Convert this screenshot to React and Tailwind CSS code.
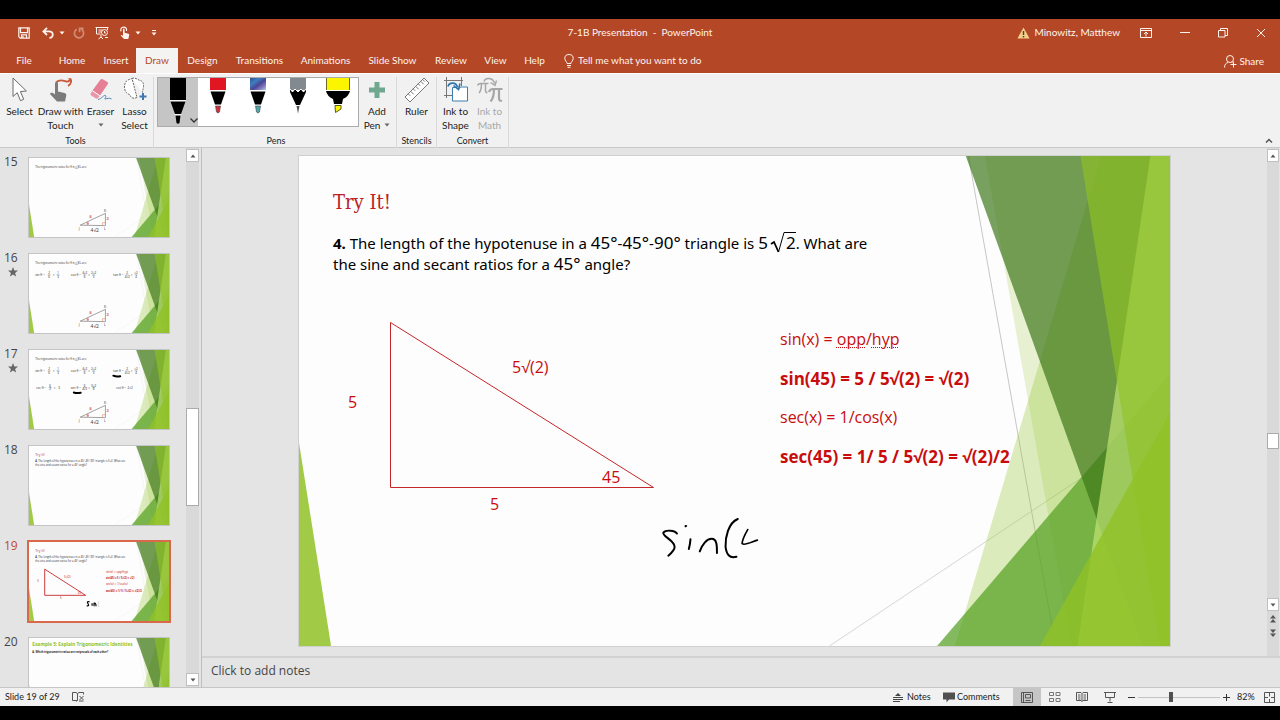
import { useState } from 'react';

const tabs = [
  { name: 'File', width: 'w-12' },
  { name: 'Home', width: 'w-12' },
  { name: 'Insert', width: 'w-10' },
  { name: 'Draw', width: 'w-[42px]' },
  { name: 'Design', width: 'w-[49px]' },
  { name: 'Transitions', width: 'w-[65px]' },
  { name: 'Animations', width: 'w-[67px]' },
  { name: 'Slide Show', width: 'w-[67px]' },
  { name: 'Review', width: 'w-[50px]' },
  { name: 'View', width: 'w-[39px]' },
  { name: 'Help', width: 'w-[39px]' },
];

const slides = [
  { id: 15 },
  { id: 16, animated: true },
  { id: 17, animated: true },
  { id: 18 },
  { id: 19 },
  { id: 20 },
];

/* ---------- Icons ---------- */

function Caret({ className = '' }) {
  return (
    <svg viewBox="0 0 6 4" className={`h-1 w-1.5 shrink-0 fill-current ${className}`} aria-hidden="true">
      <path d="M0.5 0.5h5L3 3.5z" />
    </svg>
  );
}

function SaveIcon() {
  return (
    <svg viewBox="0 0 12 12" className="size-3" fill="none" stroke="currentColor" strokeWidth="1.2">
      <path d="M0.8 0.8h10.4v10.4H2.2L0.8 9.8z" />
      <path d="M2.5 1v4.6h7V1" />
      <path d="M3.5 11V7.8h5V11M5 9v2" />
    </svg>
  );
}

function UndoIcon() {
  return (
    <svg viewBox="0 0 12 12" className="size-3" fill="none" stroke="currentColor" strokeWidth="1.8">
      <path d="M5 0.8L1.4 4.4 5 8M1.6 4.4h5.2c5.2 0 5.2 6.4 0.6 6.4" />
    </svg>
  );
}

function RedoIcon() {
  return (
    <svg viewBox="0 0 12 12" className="size-3 opacity-40" fill="none" stroke="currentColor" strokeWidth="1.7">
      <path d="M3.8 2.2a4.6 4.6 0 1 0 4.6 0.1M6.6 5.2V1.4h4" />
    </svg>
  );
}

function PresentIcon() {
  return (
    <svg viewBox="0 0 14 14" className="size-3.5" fill="none" stroke="currentColor">
      <path d="M0.5 1.5h13M1.5 1.5v6.5h4M3.5 4h4M3.5 6h3M6 8.5v2.5M3.5 13l2.5-2 2 2M12.5 2v2" />
      <circle cx="9.5" cy="6.5" r="3" />
      <path d="M9.5 5v2h1.5M10 11.5h3" />
    </svg>
  );
}

function TouchIcon() {
  return (
    <svg viewBox="0 0 12 14" className="h-3.5 w-3" fill="none" stroke="currentColor">
      <path d="M2.2 5.4A2.9 2.9 0 1 1 7.4 5" strokeWidth="1.2" />
      <path
        d="M4 3.2c0-1 1.6-1 1.6 0v3.6l3.8 0.9c0.8 0.2 1 0.7 0.8 1.5l-0.9 3.8H5L1.6 9.6c0.4-0.8 1.4-0.7 2.4 0.4z"
        fill="currentColor"
        stroke="none"
      />
    </svg>
  );
}

function BulbIcon() {
  return (
    <svg viewBox="0 0 10 14" className="h-3.5 w-2.5" fill="none" stroke="currentColor">
      <path d="M3 9.5C3 7.5 0.8 7 0.8 4.5a4.2 4 0 0 1 8.4 0C9.2 7 7 7.5 7 9.5z" />
      <path d="M3 11.5h4M3.5 13.3h3" />
    </svg>
  );
}

function WarningIcon() {
  return (
    <svg viewBox="0 0 13 12" className="h-3 w-[13px]">
      <path d="M6.5 0.5L12.6 11.5H0.4z" fill="#f5cf8e" />
      <path d="M6.5 4v4M6.5 9v1.4" stroke="#5b4323" strokeWidth="1.5" />
    </svg>
  );
}

function SelectIcon() {
  return (
    <svg viewBox="0 0 16 26" className="h-[26px] w-4">
      <path d="M1 1v18.500l4.200-3.800 3.300 8 3.200-1.400-3.300-7.800 6-0.500z" fill="#fff" stroke="#6a6a6a" />
    </svg>
  );
}

function DrawTouchIcon() {
  return (
    <svg viewBox="0 0 24 26" className="h-[26px] w-6">
      <path d="M7 5.5c4-4 8-1.5 10.5-1S23 1.5 21 2c2 1 1.5 5-2 7" fill="none" stroke="#c8593a" strokeWidth="1.8" />
      <path
        d="M6 6.5c0-2 3-2 3 0v8l6.5 1.5c1.7 0.4 2 1.5 1.7 3L16 24.5H8L1 17c0.5-2 3-1.5 5 0.5z"
        fill="#7b7b7b"
      />
    </svg>
  );
}

function EraserIcon() {
  return (
    <svg viewBox="0 0 24 26" className="h-[26px] w-6">
      <path d="M11.5 2.5q1-1 2.2-0.3L18.5 5q1 0.8 0.4 2L11 18.5 3.5 13.5z" fill="#e58097" />
      <path d="M3.5 13.5L11 18.5 9 21q-0.8 1-2 0.5L2.2 18.5q-1.2-0.8-0.5-2z" fill="#ea96a8" />
      <path d="M3.3 13.7l7.5 5" stroke="#fff" />
      <path d="M9 22.5c4-1 6-5 7.5-4s-2 4 0 3.5 3.5-1.5 6 0" fill="none" stroke="#4f86b5" />
    </svg>
  );
}

function LassoIcon() {
  return (
    <svg viewBox="0 0 24 26" className="h-[26px] w-6">
      <path
        d="M9 1.5c3.5-1.5 6 1.5 8 2s4 2 3.5 6c-0.3 3-1 4-1 6M14 20.5c-3 1.5-6 0.5-6.5-1.5-0.5-2-3.5-2-5-4.5-1.5-3-1.5-8 1-10.5C5 2.5 7 2.5 9 1.5z"
        fill="#fff"
        stroke="#6b6b6b"
        strokeDasharray="2 1"
      />
      <path d="M20 16v7M16.5 19.5h7" stroke="#3f76b0" strokeWidth="2" />
    </svg>
  );
}

function AddPenIcon() {
  return (
    <svg viewBox="0 0 24 26" className="h-[26px] w-6">
      <path d="M9.5 5h5v5.5H20v5h-5.5V21h-5v-5.5H4v-5h5.5z" fill="#6fa88f" />
    </svg>
  );
}

function RulerIcon() {
  return (
    <svg viewBox="0 0 26 26" className="size-[26px]" fill="#fff" stroke="#777">
      <path d="M1 20L20 1l5 5L6 25z" />
      <path d="M4.2 16.8l2 2M6.7 14.3l3 3M9.2 11.8l2 2M11.7 9.3l3 3M14.2 6.8l2 2M16.7 4.3l3 3M18.7 2.5l2 2" />
    </svg>
  );
}

function InkShapeIcon() {
  return (
    <svg viewBox="0 0 26 26" className="size-[26px]" fill="none">
      <path d="M1 3.5h19M3.5 0v21M1 18.5h8M18.5 0v9" stroke="#777" />
      <path d="M9.5 10.5h4q2 3 4-0.5h7v14h-15z" fill="#fff" stroke="#3d7cab" />
      <path d="M5 9.5c1-4 8-5.5 9.5 1" stroke="#2f76ac" strokeWidth="1.8" />
      <path d="M10.5 8.5l5 4 1.5-6" stroke="#2f76ac" strokeWidth="1.6" />
    </svg>
  );
}

function InkMathIcon() {
  return (
    <svg viewBox="0 0 26 26" className="size-[26px]" fill="none" stroke="#a6a6a6">
      <path d="M0.5 8.5q1-2 3-2h8M4.5 6.5q0 7-2.5 9.5M8.5 6.5v7q0 2.5 2 2" strokeWidth="1.5" />
      <path d="M12 15q1-3 4-3h9.5M17 12q0 9-3.5 12.5M22 12v9q0 3.5 3 2.5" strokeWidth="2.2" />
      <path d="M7 4.5c1-4 9-4.5 10.5 2M13.5 5.5l4.5 3 1.5-5" strokeWidth="1.4" />
    </svg>
  );
}

function PenTip({ kind }) {
  if (kind === 'selected') {
    return (
      <svg viewBox="0 0 16 46" className="h-[46px] w-4 shrink-0">
        <path d="M0 0h16v22H0z" />
        <path d="M0.5 23.5h15L11 36H5zM5.5 37.5h5L9.5 45q-1.5 1.5-3 0z" />
        <path d="M0 22.7h16M4.5 36.7h7" stroke="#fff" />
      </svg>
    );
  }
  if (kind === 'highlighter') {
    return (
      <svg viewBox="0 0 24 36" className="h-9 w-6">
        <path d="M0 0h24v12H0z" fill="#fbf500" />
        <path d="M0.5 0v12M23.5 0v12" stroke="#6d6a2a" />
        <path d="M0 13h24q-1 5-7 8l-1 5H8l-1-5q-6-3-7-8z" />
        <path d="M9 27.5h6v3.5l-5.5 3.5z" fill="#fbf500" stroke="#5c5a1b" />
      </svg>
    );
  }
  const colors = { red: '#e01622', galaxy: 'url(#galaxy)', pencil: '#828a90' };
  const tips = { red: '#d22f3c', galaxy: '#4fa6ad', pencil: '#555' };
  return (
    <svg viewBox="0 0 16 36" className="h-9 w-4">
      <defs>
        <linearGradient id="galaxy" x1="0" y1="0" x2="1" y2="1">
          <stop offset="0" stopColor="#2f4f93" />
          <stop offset="0.3" stopColor="#3f7fc0" />
          <stop offset="0.55" stopColor="#4a4596" />
          <stop offset="0.8" stopColor="#8a7fc0" />
          <stop offset="1" stopColor="#9adbe6" />
        </linearGradient>
      </defs>
      <path d="M0 0h16v12H0z" fill={colors[kind]} />
      {kind === 'pencil' ? (
        <>
          <path d="M0 14v-3l2.5 3L5 11l3 3 3-3 2.5 3L16 11v3L10 27H6z" />
          <path d="M0 11l2.5 3L5 11l3 3 3-3 2.5 3L16 11" fill="none" stroke="#fff" />
          <path d="M6.5 28h3L8 35.5z" fill={tips[kind]} />
        </>
      ) : (
        <>
          <path d="M0.5 13.5h15L11 26.5H5z" />
          <path d="M5.5 28h5l-1 6q-1.5 2-3 0z" fill={tips[kind]} stroke="#444" strokeWidth="0.6" />
        </>
      )}
    </svg>
  );
}

/* ---------- Title bar and tabs ---------- */

function TitleBar() {
  return (
    <div className="grid h-[29px] shrink-0 grid-cols-[1fr_auto_1fr] items-center bg-[#b34726] pb-0.5 text-[10px] text-[#fff3ee]">
      <div className="flex items-center pl-[18px]">
        <button aria-label="Save"><SaveIcon /></button>
        <button aria-label="Undo" className="ml-3 flex items-center gap-[5px]"><UndoIcon /><Caret /></button>
        <button aria-label="Redo" className="ml-2"><RedoIcon /></button>
        <button aria-label="Start from beginning" className="ml-2.5"><PresentIcon /></button>
        <button aria-label="Touch mode" className="ml-2.5 flex items-center gap-1"><TouchIcon /><Caret /></button>
        <button aria-label="Customize toolbar" className="ml-2.5 flex flex-col items-center gap-px">
          <span className="h-px w-1 bg-current" />
          <Caret />
        </button>
      </div>
      <h1 className="whitespace-pre">7-1B Presentation  -  PowerPoint</h1>
      <div className="flex items-center justify-end pr-3.5">
        <button className="flex items-center gap-1"><WarningIcon />Minowitz, Matthew</button>
        <button aria-label="Ribbon display options" className="ml-5">
          <svg viewBox="0 0 12 10" className="h-2.5 w-3" fill="none" stroke="currentColor">
            <path d="M0.5 0.5h11v9H0.5zM0.5 2.5h11M6 8.5V4.5M4 6l2-2 2 2" />
          </svg>
        </button>
        <button aria-label="Minimize" className="ml-7 flex h-3 items-center">
          <span className="block h-px w-2.5 bg-current" />
        </button>
        <button aria-label="Restore" className="ml-7">
          <svg viewBox="0 0 10 10" className="size-2.5" fill="none" stroke="currentColor">
            <path d="M0.5 2.5h6.5v6.5H0.5zM2.5 2.5v-2h7v7H7" />
          </svg>
        </button>
        <button aria-label="Close" className="ml-7">
          <svg viewBox="0 0 10 10" className="size-2.5" fill="none" stroke="currentColor">
            <path d="M1 1l8 8M9 1l-8 8" />
          </svg>
        </button>
      </div>
    </div>
  );
}

function TabBar({ active, onSelect }) {
  return (
    <div className="flex h-[25px] shrink-0 items-stretch bg-[#b34726] text-[10px] text-[#fff3ee]">
      {tabs.map((tab) => (
        <button
          key={tab.name}
          onClick={() => onSelect(tab.name)}
          className={`${tab.width} shrink-0 whitespace-nowrap ${
            active === tab.name ? 'bg-[#f5f3f2] text-[#b34726]' : ''
          }`}
        >
          {tab.name}
        </button>
      ))}
      <button className="ml-2.5 flex items-center gap-1 whitespace-nowrap">
        <BulbIcon />
        Tell me what you want to do
      </button>
      <button className="ml-auto flex items-center gap-0.5 pt-0.5 pr-4">
        <svg viewBox="0 0 13 13" className="size-[13px]" fill="none" stroke="currentColor">
          <circle cx="6" cy="4" r="3.5" />
          <path d="M0.5 12.5C0.5 9.5 2 8 4 7.5M7.5 7l1 0.8M6.5 9.5h6M9.5 6.5v6" />
        </svg>
        Share
      </button>
    </div>
  );
}

/* ---------- Ribbon ---------- */

function ToolButton({ icon, lines, width, caret, disabled }) {
  return (
    <button
      disabled={disabled}
      className={`flex h-full shrink-0 flex-col items-center whitespace-nowrap ${width} ${
        disabled ? 'text-[#a8a8a8]' : ''
      }`}
    >
      {icon}
      <span className="mt-px leading-[14px]">{lines[0]}</span>
      <span className="flex h-[14px] items-center gap-1 leading-[14px]">
        {lines[1]}
        {caret && <Caret className="text-[#666]" />}
      </span>
    </button>
  );
}

function RibbonGroup({ label, className, children }) {
  return (
    <section aria-label={label} className={`flex shrink-0 flex-col border-r border-[#dadada] ${className}`}>
      <div className="flex h-[57px] justify-center">{children}</div>
      <p className="text-center text-[9px] leading-[14px] text-[#222]">{label}</p>
    </section>
  );
}

function Ribbon() {
  return (
    <div className="flex h-[75px] shrink-0 items-start border-t border-b border-t-white border-b-[#c9c9c9] bg-[#f1f1f1] pt-[3px] text-[10px] text-[#222]">
      <RibbonGroup label="Tools" className="w-[154px] pr-0.5">
        <ToolButton icon={<SelectIcon />} lines={['Select']} width="w-[38px]" />
        <ToolButton icon={<DrawTouchIcon />} lines={['Draw with', 'Touch']} width="w-11" />
        <ToolButton icon={<EraserIcon />} lines={['Eraser']} width="w-9" caret />
        <ToolButton icon={<LassoIcon />} lines={['Lasso', 'Select']} width="w-8" />
      </RibbonGroup>
      <RibbonGroup label="Pens" className="w-[243px] pl-0.5">
        <div className="flex h-[50px] border border-[#ababab] bg-white">
          <button aria-label="Black pen" className="flex w-10 items-start justify-center bg-[#c5c5c5]">
            <span className="w-3" />
            <PenTip kind="selected" />
            <svg viewBox="0 0 8 5" className="mt-10 ml-1 h-[5px] w-2" fill="none" stroke="#333" strokeWidth="1.3">
              <path d="M0.5 0.5L4 4l3.5-3.5" />
            </svg>
          </button>
          <button aria-label="Red pen" className="flex w-10 justify-center"><PenTip kind="red" /></button>
          <button aria-label="Galaxy pen" className="flex w-10 justify-center"><PenTip kind="galaxy" /></button>
          <button aria-label="Pencil" className="flex w-10 justify-center"><PenTip kind="pencil" /></button>
          <button aria-label="Yellow highlighter" className="flex w-10 justify-center"><PenTip kind="highlighter" /></button>
        </div>
        <ToolButton icon={<AddPenIcon />} lines={['Add', 'Pen']} width="w-9" caret />
      </RibbonGroup>
      <RibbonGroup label="Stencils" className="w-10">
        <ToolButton icon={<RulerIcon />} lines={['Ruler']} width="w-9" />
      </RibbonGroup>
      <RibbonGroup label="Convert" className="w-[72px]">
        <ToolButton icon={<InkShapeIcon />} lines={['Ink to', 'Shape']} width="w-[34px]" />
        <ToolButton icon={<InkMathIcon />} lines={['Ink to', 'Math']} width="w-[34px]" disabled />
      </RibbonGroup>
      <button aria-label="Collapse ribbon" className="mt-auto mr-[7px] mb-1 ml-auto">
        <svg viewBox="0 0 8 5" className="h-[5px] w-2" fill="none" stroke="#555" strokeWidth="1.5">
          <path d="M1 4.5l3-3 3 3" />
        </svg>
      </button>
    </div>
  );
}

/* ---------- Slide artwork ---------- */

// Facet theme background, in thousands of EMU
function Facets({ className }) {
  return (
    <svg viewBox="0 0 12192 6858" preserveAspectRatio="none" className={className} aria-hidden="true">
      <path d="M9371 0L10590 6858" stroke="#b0b0b0" strokeWidth="10" />
      <path d="M12189 3681L7425 6858" stroke="#cfcfcf" strokeWidth="12" />
      <path d="M11227 0H12192V6858H9181z" fill="#90c226" fillOpacity="0.3" />
      <path d="M9603 0H12192V6858H10812z" fill="#90c226" fillOpacity="0.2" />
      <path d="M12192 3048V6858H8932z" fill="#54a021" fillOpacity="0.72" />
      <path d="M9334 0H12192V6858H11808z" fill="#3f7819" fillOpacity="0.7" />
      <path d="M11918 0H12192V6858H10899z" fill="#c0e474" fillOpacity="0.7" />
      <path d="M10939 0H12192V6858H12048z" fill="#90c226" fillOpacity="0.65" />
      <path d="M12192 3590V6858H10372z" fill="#90c226" fillOpacity="0.8" />
      <path d="M0 4013L449 6858H0z" fill="#90c226" fillOpacity="0.85" />
    </svg>
  );
}

function Ink() {
  return (
    <svg
      viewBox="0 0 300 130"
      className="absolute top-[361px] left-[361px] h-[43px] w-[100px]"
      fill="none"
      stroke="#000"
      strokeWidth="6"
      strokeLinecap="round"
      strokeLinejoin="round"
      aria-label="Handwritten note"
    >
      <path d="M50 50C44 40 16 38 9 47C4 58 46 72 43 92C42 102 32 110 24 117" />
      <path d="M91 67Q90 82 86 97M76 28l2-1" />
      <path d="M119 104C126 84 140 66 155 66C172 66 171 90 171 109" />
      <path d="M234 6C205 18 196 62 197 90C200 112 208 126 230 120" />
      <path d="M264 38C256 52 248 66 247 80C254 88 274 76 293 70" strokeWidth="5" />
    </svg>
  );
}

function Num({ children }) {
  return <span className="text-[17px] leading-none">{children}</span>;
}

function MainSlide() {
  return (
    <article className="relative h-[490px] w-[871px] shrink-0 overflow-hidden bg-[#fdfdfd] font-['Open_Sans',sans-serif] text-[16px] text-[#c80c0c] outline outline-[#d0d0d0]">
      <Facets className="absolute inset-0 size-full" />
      <h2 className="absolute top-8 left-[34px] font-['DejaVu_Serif_Condensed','DejaVu_Serif',serif] text-[20px] leading-7 text-[#bc2025]">
        Try It!
      </h2>
      <p className="absolute top-[77px] left-[34px] font-['Noto_Sans',sans-serif] text-[15px] leading-[21px] whitespace-nowrap text-black">
        <b>4.</b> The length of the hypotenuse in a <Num>45°</Num>-<Num>45°</Num>-<Num>90°</Num> triangle is <Num>5</Num>
        <svg viewBox="0 0 26 22" className="-mt-1.5 -mr-2.5 ml-0.5 inline h-[22px] w-[26px]" fill="none" stroke="#000" aria-label="square root of">
          <path d="M1 13l3-2 4.5 10" strokeWidth="1.8" />
          <path d="M8.5 21L14 1.5h12" />
        </svg>
        <Num>2</Num>. What are
        <br />
        the sine and secant ratios for a <Num>45°</Num> angle?
      </p>
      <svg viewBox="0 0 266 168" className="absolute top-[165px] left-[90px] h-[168px] w-[266px]" fill="none" stroke="#c4262a">
        <path d="M1.5 1.5V166.5H264.5z" />
      </svg>
      <span className="absolute top-[234px] left-[49px]">5</span>
      <span className="absolute top-[199px] left-[213px]">5√(2)</span>
      <span className="absolute top-[309px] left-[303px]">45</span>
      <span className="absolute top-[336px] left-[191px]">5</span>
      <div className="absolute top-[164px] left-[481px] leading-[39px] whitespace-nowrap">
        <p>
          sin(x) = <span className="underline decoration-dotted decoration-1 underline-offset-2">opp</span>/
          <span className="underline decoration-dotted decoration-1 underline-offset-2">hyp</span>
        </p>
        <p className="text-[17px] font-bold">sin(45) = 5 / 5√(2) = √(2)</p>
        <p>sec(x) = 1/cos(x)</p>
        <p className="text-[17px] font-bold">sec(45) = 1/ 5 / 5√(2) = √(2)/2</p>
      </div>
      <Ink />
    </article>
  );
}

/* ---------- Thumbnails ---------- */

function ThumbTriangle() {
  return (
    <g fontSize="3.5" fill="#333">
      <path d="M51.5 68L77 56v12.5z" fill="none" stroke="#777" strokeWidth="0.7" />
      <path d="M74 68.5v-3h3" fill="none" stroke="#d9774f" strokeWidth="0.5" />
      <text x="50" y="72.5">J</text>
      <text x="75.5" y="55">K</text>
      <text x="75.5" y="73">L</text>
      <text x="61" y="61" fontSize="4" fontWeight="bold" fill="#d9573a">6</text>
      <text x="78" y="63" fontSize="4" fontWeight="bold" fill="#d9573a">2</text>
      <text x="58" y="67.5" fontWeight="bold" fill="#d9573a">θ</text>
      <text x="62" y="75" fontSize="5">4√2</text>
    </g>
  );
}

// One "name = a/b = c/d" line with stacked fractions
function Ratio({ x, y, name, parts }) {
  return (
    <g fontSize="3.2">
      <text x={x} y={y}>{name} =</text>
      {parts.map((part, i) => {
        const cx = x + 14 + i * 9;
        return (
          <g key={i} textAnchor="middle" fontSize="3">
            {i > 0 && <text x={cx - 4.5} y={y}>=</text>}
            {part.length === 1 ? (
              <text x={cx} y={y}>{part[0]}</text>
            ) : (
              <>
                <text x={cx} y={y - 1.4}>{part[0]}</text>
                <path d={`M${cx - 1.5} ${y - 0.9}h3`} stroke="#333" strokeWidth="0.3" />
                <text x={cx} y={y + 1.8}>{part[1]}</text>
              </>
            )}
          </g>
        );
      })}
    </g>
  );
}

function ThumbQuestion() {
  return (
    <>
      <text x="6" y="10" fontSize="3.6" fill="#bc2025">Try It!</text>
      <text x="6" y="16" fontSize="2.7"><tspan fontWeight="bold">4.</tspan> The length of the hypotenuse in a 45°-45°-90° triangle is 5√2. What are</text>
      <text x="6" y="20" fontSize="2.7">the sine and secant ratios for a 45° angle?</text>
    </>
  );
}

function ThumbArt({ id }) {
  return (
    <svg viewBox="0 0 141 80" className="absolute inset-0 size-full font-['Open_Sans',sans-serif]" fill="#222">
      {id <= 17 && (
        <>
          <text x="6" y="10" fontSize="2.7">The trigonometric ratios for θ in △JKL are:</text>
          <ThumbTriangle />
        </>
      )}
      {(id === 16 || id === 17) && (
        <>
          <Ratio x={6} y={22} name="sin θ" parts={[['2', '6'], ['1', '3']]} />
          <Ratio x={42} y={22} name="cos θ" parts={[['4√2', '6'], ['2√2', '3']]} />
          <Ratio x={85} y={22} name="tan θ" parts={[['2', '4√2'], ['√2', '4']]} />
        </>
      )}
      {id === 17 && (
        <>
          <Ratio x={7} y={39} name="csc θ" parts={[['6', '2'], ['3']]} />
          <Ratio x={42} y={39} name="sec θ" parts={[['6', '4√2'], ['3√2', '4']]} />
          <Ratio x={88} y={39} name="cot θ" parts={[['2√2']]} />
          <path d="M85 26q3 1.5 7 0.6M45 43q3 1 7 0.3" fill="none" stroke="#000" strokeWidth="2" strokeLinecap="round" />
        </>
      )}
      {(id === 18 || id === 19) && <ThumbQuestion />}
      {id === 19 && (
        <g fill="#c80c0c" fontSize="3">
          <path d="M15.5 27.5V54H57z" fill="none" stroke="#c4262a" strokeWidth="0.9" />
          <text x="8" y="41">5</text>
          <text x="35" y="36">5√(2)</text>
          <text x="49" y="53">45</text>
          <text x="31" y="58">5</text>
          <text x="77.5" y="31.5">sin(x) = opp/hyp</text>
          <text x="77.5" y="37.5" fontWeight="bold" fontSize="2.6">sin(45) = 5 / 5√(2) = √(2)</text>
          <text x="77.5" y="44">sec(x) = 1/cos(x)</text>
          <text x="77.5" y="50.5" fontWeight="bold" fontSize="2.7">sec(45) = 1/ 5 / 5√(2) = √(2)/2</text>
          <path
            d="M61 60.5q-3-0.5-2 1.2t1 2.3q-0.5 1-2 0.5M63.5 62v2.5M65.5 65v-3q2-0.5 2 3"
            fill="none"
            stroke="#000"
            strokeWidth="1.2"
          />
          <path d="M70.5 60q-2 3 0 6" fill="none" stroke="#aaa" strokeWidth="0.5" />
        </g>
      )}
      {id === 20 && (
        <>
          <text x="3" y="8" fontSize="4.7" fontWeight="bold" fill="#90c226">Example 5: Explain Trigonometric Identities</text>
          <text x="3" y="15" fontSize="2.6" fontWeight="bold">A. Which trigonometric ratios are reciprocals of each other?</text>
        </>
      )}
    </svg>
  );
}

function Thumbnail({ slide, selected, onSelect }) {
  return (
    <li className="flex h-24 shrink-0 items-start">
      <div className={`-mt-[5px] flex w-7 flex-col items-start pl-[3px] text-[12px] leading-[18px] ${selected ? 'text-[#c04a2c]' : 'text-[#444]'}`}>
        {slide.id}
        {slide.animated && (
          <svg viewBox="0 0 10 10" className="ml-1 size-2.5 fill-[#666]" aria-label="Has animations">
            <path d="M5 0l1.3 3.5 3.7 0.1-2.9 2.3 1 3.6L5 7.5 1.900 9.500l1-3.600L0 3.600l3.700-0.100z" />
          </svg>
        )}
      </div>
      <button
        aria-label={`Slide ${slide.id}`}
        onClick={() => onSelect(slide.id)}
        className={`relative h-[79px] w-[140px] bg-[#fdfdfd] ${
          selected ? 'outline-2 outline-[#d9694a]' : 'outline outline-[#c4c4c4]'
        }`}
      >
        <Facets className="absolute inset-0 size-full" />
        <ThumbArt id={slide.id} />
      </button>
    </li>
  );
}

function ScrollButton({ label, up }) {
  return (
    <button aria-label={label} className="flex h-[13px] w-full shrink-0 items-center justify-center border border-[#c0c0c0] bg-white text-[#555]">
      <Caret className={up ? 'rotate-180' : ''} />
    </button>
  );
}

function SlideList({ current, onSelect }) {
  return (
    <nav aria-label="Slides" className="flex w-[202px] shrink-0 border-r border-[#bdbdbd] font-['Open_Sans',sans-serif]">
      <ol className="flex min-h-0 flex-1 flex-col overflow-hidden pt-2.5 pl-px">
        {slides.map((slide) => (
          <Thumbnail key={slide.id} slide={slide} selected={slide.id === current} onSelect={onSelect} />
        ))}
      </ol>
      <div className="mr-0.5 flex w-[13px] flex-col bg-[#d9d9d9] py-px">
        <ScrollButton label="Scroll up" up />
        <div className="flex-[247]" />
        <div className="flex-[97] border border-[#ababab] bg-white" />
        <div className="flex-[168]" />
        <ScrollButton label="Scroll down" />
      </div>
    </nav>
  );
}

/* ---------- Editor ---------- */

function DoubleArrow({ down }) {
  return (
    <svg viewBox="0 0 6 8" className={`h-2 w-1.5 fill-[#555] ${down ? 'rotate-180' : ''}`}>
      <path d="M3 0l3 3.5H0zM3 4l3 3.5H0z" />
    </svg>
  );
}

function Editor() {
  return (
    <main className="flex min-w-0 flex-1 flex-col">
      <div className="flex min-h-0 flex-1">
        <div className="flex min-w-0 flex-1 justify-center overflow-hidden pt-2">
          <MainSlide />
        </div>
        <div className="mr-px flex w-3 flex-col bg-[#d9d9d9] pt-px">
          <ScrollButton label="Previous" up />
          <div className="flex-[274]" />
          <div className="h-4 border border-[#ababab] bg-white" />
          <div className="flex-[150]" />
          <ScrollButton label="Next" />
          <button aria-label="Previous slide" className="mt-px flex h-3.5 items-center justify-center"><DoubleArrow /></button>
          <button aria-label="Next slide" className="mb-4 flex h-3.5 items-center justify-center"><DoubleArrow down /></button>
        </div>
      </div>
      <div className="flex h-[31px] shrink-0 items-start border-t-2 border-[#d2d2d2] pt-[3px] pl-[9px]">
        <input
          aria-label="Notes"
          placeholder="Click to add notes"
          className="h-5 w-full bg-transparent font-['Open_Sans',sans-serif] text-[12px] leading-5 outline-none placeholder:text-[#444]"
        />
      </div>
    </main>
  );
}

/* ---------- Status bar ---------- */

function StatusBar() {
  const [zoom, setZoom] = useState(82);

  return (
    <footer className="flex h-[19px] shrink-0 items-center border-t border-[#c6c6c6] bg-[#f1f1f1] pl-[5px] text-[9px] text-[#222]">
      <span className="w-[67px] whitespace-nowrap">Slide 19 of 29</span>
      <button aria-label="Spelling">
        <svg viewBox="0 0 12 10" className="h-2.5 w-3" fill="none" stroke="#555">
          <path d="M5.5 1.5v7L4.5 9.5M5.5 1.5L4 0.5H0.5v8H5M5.5 1.5L7 0.5h4.5v2M7.5 4l4 4M11.5 4l-4 4M7 9h4.5" />
        </svg>
      </button>
      <button className="ml-auto flex w-[50px] items-center gap-1">
        <svg viewBox="0 0 10 9" className="h-[9px] w-2.5" fill="none" stroke="#444">
          <path d="M5 0l3 3H2z" fill="#444" stroke="none" />
          <path d="M0 4.5h10M0 6.5h10M0 8.5h7" />
        </svg>
        Notes
      </button>
      <button className="flex w-[70px] items-center gap-0.5">
        <svg viewBox="0 0 12 11" className="h-[11px] w-3 fill-[#505050]">
          <path d="M0 0.5h12v7H6L3.5 10.5V7.5H0z" />
        </svg>
        Comments
      </button>
      <button aria-label="Normal view" className="flex h-full w-7 items-center justify-center bg-[#c6c6c6]">
        <svg viewBox="0 0 12 11" className="h-[11px] w-3" fill="none" stroke="#555">
          <path d="M0.5 0.5h11v10H0.5zM2.5 0.5v10M4.5 2.5h5v3.5h-5zM4.5 8.5h5" />
        </svg>
      </button>
      <button aria-label="Slide sorter" className="flex h-full w-[27px] items-center justify-center">
        <svg viewBox="0 0 12 11" className="h-[11px] w-3" fill="none" stroke="#777">
          <path d="M0.5 0.5h4v3h-4zM7 0.5h4v3h-4zM0.5 6.5h4v3h-4zM7 6.5h4v3h-4z" />
        </svg>
      </button>
      <button aria-label="Reading view" className="flex h-full w-7 items-center justify-center">
        <svg viewBox="0 0 12 10" className="h-2.5 w-3" fill="none" stroke="#555">
          <path d="M6 1.5v8M6 1.5L5 0.5H0.5v8H5l1 1 1-1h4.5v-8H7zM2 3h2.5M2 5h2.5M7.5 3H10M7.5 5H10M2 7h2.5M7.5 7H10" />
        </svg>
      </button>
      <button aria-label="Slide show" className="flex h-full w-7 items-center justify-center">
        <svg viewBox="0 0 12 11" className="h-[11px] w-3" fill="none" stroke="#555">
          <path d="M0 0.5h12M1.5 0.5v5h9v-5M6 5.5v4M3.5 10.5h5" />
        </svg>
      </button>
      <button aria-label="Zoom out" onClick={() => setZoom(zoom - 10)} className="flex h-full w-3.5 items-center justify-center">
        <span className="h-px w-[7px] bg-[#333]" />
      </button>
      <input
        type="range"
        aria-label="Zoom"
        min="10"
        max="190"
        value={zoom}
        onChange={(e) => setZoom(Number(e.target.value))}
        className="h-px w-[82px] appearance-none bg-[#c4c4c4] [&::-webkit-slider-thumb]:h-2.5 [&::-webkit-slider-thumb]:w-1 [&::-webkit-slider-thumb]:appearance-none [&::-webkit-slider-thumb]:bg-[#505050]"
      />
      <button aria-label="Zoom in" onClick={() => setZoom(zoom + 10)} className="ml-0.5 flex h-full w-2 items-center justify-center">
        <svg viewBox="0 0 7 7" className="size-[7px]" stroke="#333">
          <path d="M0 3.5h7M3.5 0v7" />
        </svg>
      </button>
      <span className="ml-[7px] w-[27px]">{zoom}%</span>
      <button aria-label="Fit slide to window" className="mr-[5px]">
        <svg viewBox="0 0 11 11" className="size-[11px]" fill="none" stroke="#555">
          <path d="M0.5 0.5h10v10h-10zM5.5 1v3.5M5.5 7v3.5M1 5.5h3M7 5.5h3" />
        </svg>
      </button>
    </footer>
  );
}

export default function App() {
  const [activeTab, setActiveTab] = useState('Draw');
  const [current, setCurrent] = useState(19);

  return (
    <div className="h-screen bg-black pt-[19px] pb-3.5 font-['Lato','Open_Sans',sans-serif]">
      <div className="flex h-full flex-col overflow-hidden bg-[#e4e4e4]">
        <TitleBar />
        <TabBar active={activeTab} onSelect={setActiveTab} />
        <Ribbon />
        <div className="flex min-h-0 flex-1">
          <SlideList current={current} onSelect={setCurrent} />
          <Editor />
        </div>
        <StatusBar />
      </div>
    </div>
  );
}
